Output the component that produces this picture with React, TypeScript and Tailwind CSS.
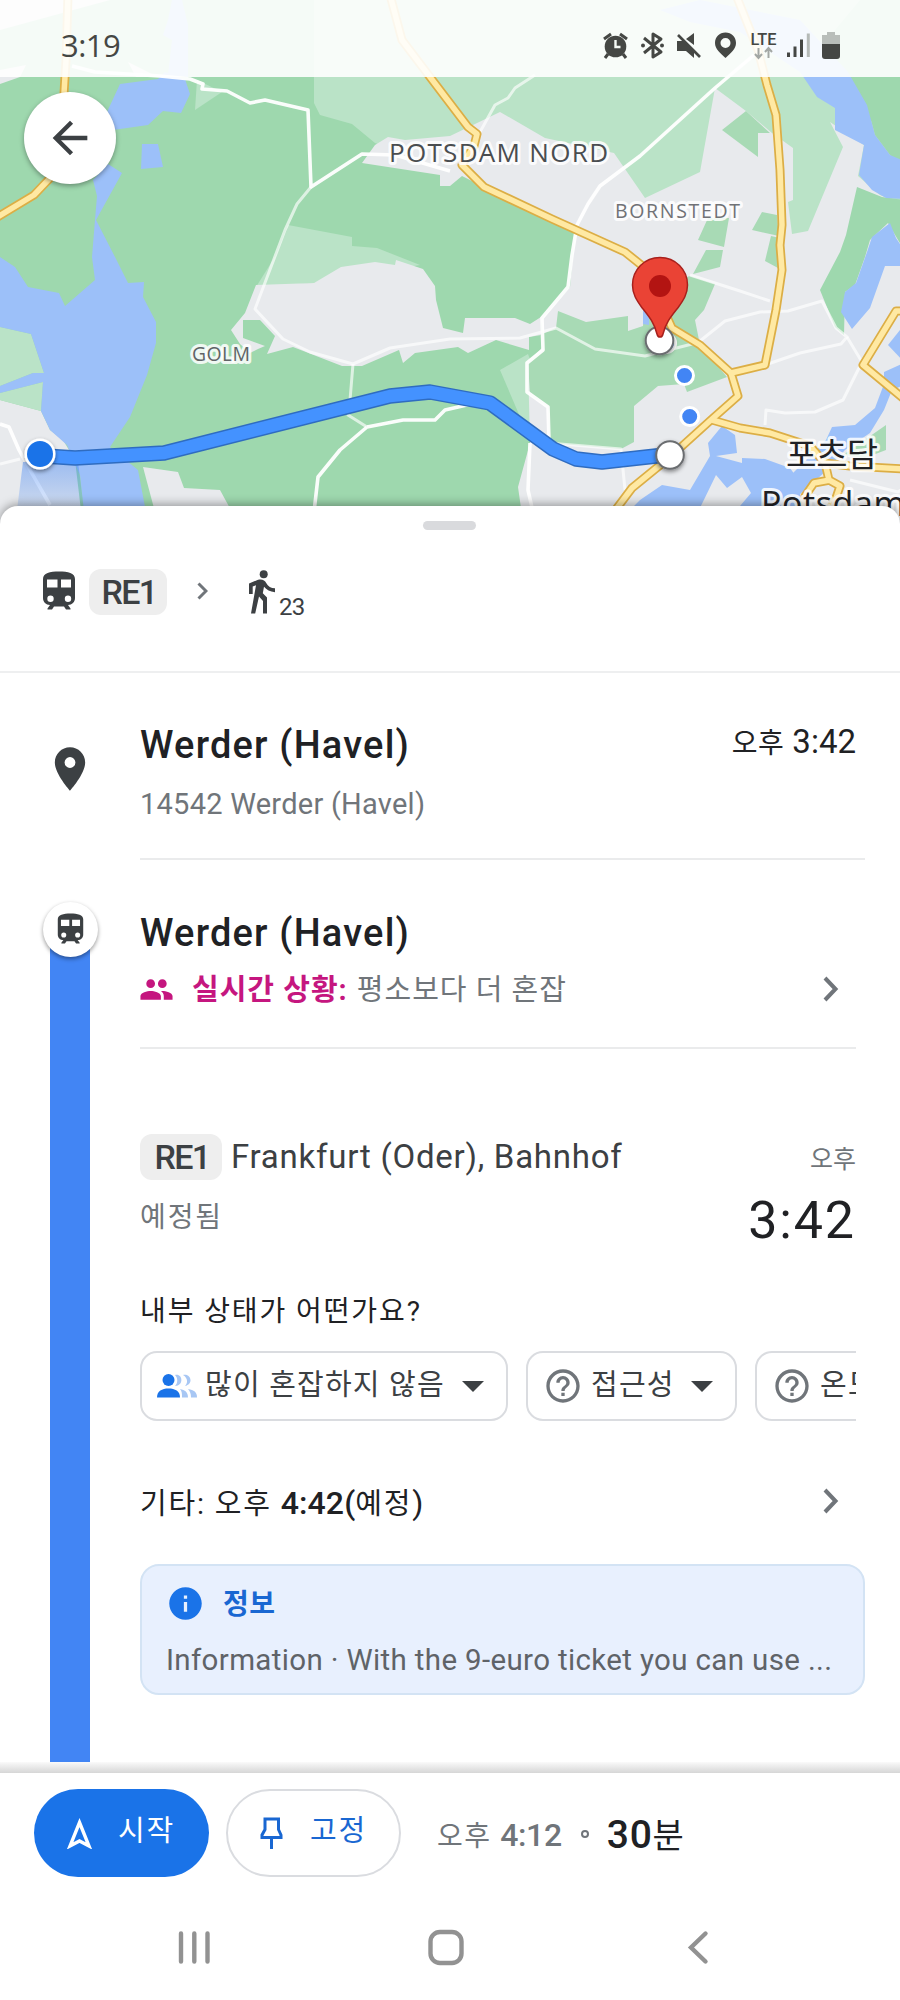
import type { ReactNode } from "react";
import {
  MdArrowBack,
  MdHelpOutline,
  MdInfo,
  MdPeople,
  MdPlace,
} from "react-icons/md";

const SANS = "font-['Roboto','Noto_Sans_CJK_KR',sans-serif]";
const HAND = "font-['Open_Sans','Noto_Sans_CJK_KR',sans-serif]";

const majorRoads = [
  "M68 -5 L66 60 L63 110",
  "M52 176 L34 195 L-4 218",
  "M390 -5 L402 40 L430 77 L468 127 L477 134 L474 146 L462 165 L484 187 L552 219 L625 252 L645 268 L672 328 L700 345 L731 373",
  "M736 -5 L758 50 L767 85 L776 115 L780 170 L782 225 L780 245 L782 270 L776 310 L765 365 L731 373 L738 396 L712 419 L670 457 L632 488 L614 512",
  "M712 420 L740 428 L770 433 L810 446 L825 463 L850 466 L904 469",
  "M825 463 L829 480 L840 486 L836 498 L830 508 M830 480 L814 483 L805 496 L804 510",
  "M904 311 L896 311 L863 365 L904 399",
];

const whiteRoads = [
  "M72 66 L95 72 L160 76 L190 79 L203 84 L202 89 L227 91 L250 103 L265 100 L308 110 L311 187 L362 154 L395 155 L450 171",
  "M754 55 L715 88 L640 156 L600 186 L588 204 L577 225 L572 255 L568 287 L542 318 L543 350 L527 363 L527 392 L548 407 L549 441",
  "M367 427 L403 420 L435 420 L445 410 L480 402 M367 427 L340 450 L318 477 L314 512 M0 424 L9 427 L19 450 L30 470 L50 505",
  "M530 443 L528 490 L533 512",
];

const thinRoads = [
  "M311 187 L297 204 L285 230 L255 309 L283 339 L310 352 L353 364 L390 348 L450 339 L520 338 L556 328 L595 349 L645 356 L700 342",
  "M353 364 L350 400 L348 415 L367 427",
  "M690 275 L740 291 L770 301 M700 341 L725 321 L760 312 L788 311 L822 301 L836 328 L847 337 L841 344 L800 353 L765 365",
  "M847 337 L862 362 L843 400 L815 412 L785 413 L766 410 L765 425",
  "M548 443 L621 449 L625 490 M850 480 L898 492 L904 488 M0 464 L20 459",
  "M535 75 L515 88 L508 98 L495 105 L480 132",
];

const water = [
  "172,0 182,0 188,25 188,77 168,75 172,40 163,35 168,20",
  "120,84 158,79 165,72 185,79 190,94 181,113 163,111 148,125 113,130 107,112",
  "142,144 158,144 163,167 141,169",
  "108,164 122,173 96,220 115,257 128,283 144,282 143,297 156,322 156,343 147,375 130,417 110,447 138,470 146,512 84,512 80,475 67,445 50,430 41,411 43,382 0,393 0,386 33,373 44,373 31,334 0,327 0,257 15,267 28,287 59,293 65,306 95,280 92,257 95,220 97,196 93,180",
  "800,72 817,97 835,108 835,130 864,145 859,175 872,190 886,198 904,199 904,161 890,155 875,135 867,105 848,72 800,20 700,0 660,10 690,22 740,32",
  "890,223 872,237 867,252 856,283 845,292 841,312 852,329 870,308 885,266 904,266 904,250 896,238",
  "904,325 888,345 904,362",
  "884,372 904,363 904,385 892,390 884,410 870,433 845,450 825,472 790,503 784,482 826,440 832,427 855,425 875,408 884,384",
  "722,426 735,435 737,453 716,456 742,463 742,458 765,459 790,468 800,482 800,512 735,512 751,493 742,477 727,488 716,475 698,512 628,512 640,500 662,485 690,490 710,456 708,443",
  "643,308 649,313 649,325 643,324",
];

function MapView() {
  return (
    <svg viewBox="0 0 900 536" className="block h-[536px] w-[900px]">
      <rect width="900" height="536" fill="#9ed8ae" />
      {/* land cover */}
      <path d="M0 0H110L0 30z M128 62l30 15h-22z" fill="#e8eaed" />
      <path d="M0 70L26 65L20 77L0 84z" fill="#e8eaed" />
      <path
        d="M314 0H860L800 72L900 140V200H870L808 240H640L420 160L375 143L352 124L320 115L314 103z M197 80L222 92L195 110z M288 225L352 237V246L377 248L420 265L314 283L256 287L276 255z M528 354L500 370L530 440H548L545 400z"
        fill="#bae3c7"
      />
      <path d="M850 70H904V165L890 155L875 135L867 105z" fill="#9ed8ae" />
      <path
        d="M362 163L375 145L388 137L405 140L450 136L500 112L545 138L614 153L645 198L700 172L715 88L746 111L772 133L793 148V200L788 202L792 234L808 231L843 147L830 122L864 145L858 176L880 195L904 205V536H525L518 487L530 443L528 362L545 345L541 320L570 287L575 232L484 187L462 176L450 186H440V175z"
        fill="#e8eaed"
      />
      <path
        d="M256 285L314 283L341 267L375 262L395 265L396 260L423 269L435 286L436 300L443 328L463 333L465 318L515 318L530 324L541 317V335L529 337V350L496 340L468 353L458 347L415 353L403 363L399 350L362 366H342L293 347L267 354L275 336L260 320H243V338L265 346L258 349L250 353L240 344L231 330L245 313z"
        fill="#e8eaed"
      />
      <path
        d="M0 400L41 411L50 430L63 440L75 460L84 536H0z M143 467L178 472L184 488L220 490L232 512H155z"
        fill="#e8eaed"
      />
      <path d="M0 327L31 334L44 373H33L0 386z M0 393L43 382L41 411L0 400z" fill="#bae3c7" />
      <path
        d="M558 311L586 322L628 316V331L643 326L645 290L690 276L715 284L704 310L695 320L700 345L727 377L687 392L684 384L658 386L634 406V442L621 449L562 444L549 441L548 407L530 395L528 362L543 350L540 335L556 328z M722 130L746 111L770 133L758 133V157z M708 218L729 218L724 247L698 240z M706 250H723L720 267L693 274z M762 212L777 215L779 236L752 230z M771 236L765 261L778 268L780 238z M843 455L886 425V450L865 458z"
        fill="#a8dab5"
      />
      <path
        d="M857 187L882 197L904 200V250L888 223L870 240L865 257L855 285L845 292L844 335L835 327L820 290L840 252L846 235z"
        fill="#9ed8ae"
      />
      <g fill="#9cc0f9">
        {water.map((points) => (
          <polygon key={points} points={points} />
        ))}
      </g>

      {/* roads */}
      <g fill="none" strokeLinejoin="round">
        {thinRoads.map((d) => (
          <path key={d} d={d} stroke="#fff" strokeOpacity="0.65" strokeWidth="3" />
        ))}
        {whiteRoads.map((d) => (
          <path key={d} d={d} stroke="#fff" strokeOpacity="0.95" strokeWidth="3.6" />
        ))}
        {majorRoads.map((d) => (
          <path key={d} d={d} stroke="#dcae45" strokeWidth="9" />
        ))}
        {majorRoads.map((d) => (
          <path key={d} d={d} stroke="#ffe9a3" strokeWidth="5.5" />
        ))}
      </g>

      {/* area labels */}
      <g
        className={HAND}
        fill="#4a4d50"
        stroke="#fff"
        strokeWidth="6"
        strokeOpacity="0.85"
        strokeLinejoin="round"
        paintOrder="stroke"
      >
        <text x="389" y="162" fontSize="26" textLength="219">POTSDAM NORD</text>
        <text x="615" y="218" fontSize="19.500" textLength="125" fill="#707276">BORNSTEDT</text>
        <text x="192" y="361" fontSize="19.500" textLength="58" fill="#606467">GOLM</text>
        <text x="786" y="467" fontSize="34" textLength="92" fill="#202124">포츠담</text>
        <text x="761" y="516" fontSize="34" textLength="144" fill="#202124">Potsdam</text>
      </g>

      {/* route */}
      <defs>
        <linearGradient id="beam" x1="0" y1="0" x2="0" y2="1">
          <stop offset="0" stopColor="#4285f4" stopOpacity="0.45" />
          <stop offset="1" stopColor="#4285f4" stopOpacity="0.15" />
        </linearGradient>
        <filter id="drop" x="-50%" y="-50%" width="200%" height="200%">
          <feDropShadow dx="0" dy="2" stdDeviation="2" floodOpacity="0.45" />
        </filter>
      </defs>
      <path d="M23 462H78L84 510H17z" fill="url(#beam)" />
      <g fill="none" strokeLinejoin="round">
        <path d="M45 456L75 458L164 453L390 396L430 392L490 403L553 449L576 459L602 462L665 455" stroke="#2f6cc0" strokeWidth="15.5" />
        <path d="M45 456L75 458L164 453L390 396L430 392L490 403L553 449L576 459L602 462L665 455" stroke="#4492ff" strokeWidth="12.5" />
      </g>
      <circle cx="40" cy="454" r="15.5" fill="#fff" filter="url(#drop)" />
      <circle cx="40" cy="454" r="13" fill="#1a73e8" />
      <g fill="#4285f4" stroke="#fff" strokeWidth="3">
        <circle cx="666" cy="343" r="9.5" />
        <circle cx="684.500" cy="375.500" r="9" />
        <circle cx="689.700" cy="416.500" r="9" />
      </g>
      <g fill="#fff" stroke="#6b6d70" strokeWidth="2" filter="url(#drop)">
        <circle cx="659.500" cy="340.500" r="13.800" />
        <circle cx="670" cy="455" r="13.800" />
      </g>
      <path
        d="M660 257.500c-15.500 0-27.500 12.300-27.500 27.500c0 9 4 15 9 22c7 9 12.500 15 15.500 27c.8 4 5.200 4 6 0c3-12 8.500-18 15.500-27c5-7 9-13 9-22c0-15.200-12-27.500-27.500-27.500z"
        fill="#ea4335"
        stroke="#a8201c"
        strokeWidth="1.500"
      />
      <circle cx="660" cy="286" r="11" fill="#b31412" />
    </svg>
  );
}

function StatusBar() {
  return (
    <div className="absolute inset-x-0 top-0 flex h-[77px] items-start justify-between bg-white/90 pl-[61px] pr-[59px]">
      <span className={`${HAND} mt-[27px] text-[31px] leading-[36px] tracking-[-0.5px] text-[#454744]`}>3:19</span>
      <svg viewBox="602 30 239 32" className="mt-[30px] h-[32px] w-[239px]" fill="#454744">
        {/* alarm */}
        <circle cx="615.500" cy="46.500" r="10.800" />
        <path d="M604 39l7-5M627 39l-7-5M608 54l-3 4M623 54l3 4" stroke="#454744" strokeWidth="3" />
        <path d="M615.500 40v7h5" fill="none" stroke="#f5faf6" strokeWidth="2.400" />
        {/* bluetooth */}
        <path d="M644 38l17 14l-8 5V34l8 5l-17 14" fill="none" stroke="#454744" strokeWidth="3" strokeLinejoin="round" />
        <circle cx="643" cy="45.500" r="2" />
        <circle cx="662" cy="45.500" r="2" />
        {/* muted speaker */}
        <path d="M677 41h6l11 11v6l-8-7h-9zM686 39l8-6v12z" />
        <path d="M678 35l22 22" stroke="#454744" strokeWidth="2.600" />
        {/* location */}
        <path fillRule="evenodd" d="M725.500 32.500c-6 0-10.500 4.500-10.500 10.500c0 6 5.500 10.500 10.500 15c5-4.500 10.500-9 10.500-15c0-6-4.500-10.500-10.500-10.500zm0 5.500a5 5 0 110 10a5 5 0 010-10z" />
        <text x="750.500" y="44.500" fontSize="16" fontWeight="500" textLength="26" lengthAdjust="spacingAndGlyphs" className={SANS}>LTE</text>
        <path d="M758.500 48v9.500M755 54l3.500 4l3.500-4M768.500 58v-9.500M765 52l3.500-4l3.500 4" fill="none" stroke="#a3a7a4" strokeWidth="2" />
        {/* signal */}
        <path d="M788.500 52.500v4.500M795 46.500v10.500M801.500 39.500v17.500" stroke="#454744" strokeWidth="3" />
        <path d="M808.300 33.500v23.500" stroke="#b5bab7" strokeWidth="3" />
        {/* battery */}
        <path d="M827 32h8v3h5v10h-18v-10h5z" fill="#b9beba" />
        <path d="M822 44h18v12a3 3 0 01-3 3h-12a3 3 0 01-3-3z" />
      </svg>
    </div>
  );
}

function TrainIcon({ className }: { className: string }) {
  return (
    <svg viewBox="0 0 32 39" className={className} fill="#3c4043">
      <path
        fillRule="evenodd"
        d="M16 .5C7 .5 0 2 0 8v19c0 4 3 7 7 7l-2.500 3.500v1h4.500l2-3h10l2 3h4.500v-1L25 34c4 0 7-3 7-7V8C32 2 25 .5 16 .5zM4 8.500h10.500v8H4zM18 8.500h10v8H18zM7.500 24.500a3.200 3.200 0 110 6.400a3.200 3.200 0 010-6.400zM25 24.500a3.200 3.200 0 110 6.400a3.200 3.200 0 010-6.400z"
      />
    </svg>
  );
}

function WalkIcon() {
  return (
    <svg viewBox="0 0 27 44" className="h-[44px] w-[27px]" fill="#3c4043">
      <circle cx="15.700" cy="4.200" r="4" />
      <path d="M9.500 10L1 13.500V24h3.700v-7.500L8 15.200L3 43.500h4.200l3.800-17l4 4.500v12.500h4V27.500l-4.200-4.300l1.200-6.500c2.500 3 6 5 11 5.500v-4c-4 0-7-2-8.800-5.300C16.800 10.500 14 8.500 9.500 10z" />
    </svg>
  );
}

function Chevron() {
  return (
    <svg viewBox="0 0 16 26" className="h-[26px] w-[16px] shrink-0">
      <path d="M2 2l10.500 11L2 24" fill="none" stroke="#70757a" strokeWidth="4" />
    </svg>
  );
}

function LineBadge({ className }: { className: string }) {
  return (
    <span className={`flex h-[46px] items-center justify-center rounded-[12px] bg-[#eeeeee] pl-[2px] text-[34px] font-medium tracking-[-1.6px] text-[#3c4043] ${className}`}>
      RE1
    </span>
  );
}

function FilterChip({ icon, label, className }: { icon: ReactNode; label: string; className: string }) {
  return (
    <div className={`flex h-[70px] shrink-0 items-center rounded-[17px] border-2 border-[#dadce0] ${className}`}>
      {icon}
      <span className="ml-[8px] flex-1 whitespace-nowrap tracking-[1.2px] text-[#3c4043]">{label}</span>
      <svg viewBox="0 0 22 11" className="h-[11px] w-[22px]">
        <path d="M0 0h22l-11 11z" fill="#3c4043" />
      </svg>
    </div>
  );
}

function CrowdIcon() {
  return (
    <svg viewBox="0 0 40 24" className="h-[24px] w-[40px] shrink-0">
      <g fill="#a8c7f4">
        <path d="M18 1c8-2 9 11 0 11c3-3 3-8 0-11zM26 1c8-2 11 9 2 11c3-3 3-8-2-11zM23 15c5 1 8 3 8 8.500h-6c0-4 0-6-2-8.500zM31 15c6 1 9 3 9 8.500h-6c0-4-1-6-3-8.500z" />
      </g>
      <circle cx="11.500" cy="6" r="6" fill="#1a73e8" />
      <path d="M0 23.500C0 17 5 14.500 11.500 14.500S23 17 23 23.500z" fill="#1a73e8" />
    </svg>
  );
}

export default function App() {
  return (
    <div className={`${SANS} relative flex h-[2000px] w-[900px] flex-col overflow-hidden bg-white text-[#202124]`}>
      <header className="relative -mb-[30px] h-[536px] shrink-0">
        <MapView />
        <StatusBar />
        <button className="absolute left-[24px] top-[92px] flex size-[92px] items-center justify-center rounded-full bg-white shadow-[0_2px_5px_rgba(0,0,0,0.35)]">
          <MdArrowBack className="size-[52px] text-[#3c4043]" />
        </button>
      </header>

      <main className="relative flex h-[1256px] shrink-0 flex-col rounded-t-[18px] bg-white shadow-[0_-2px_10px_rgba(0,0,0,0.35)]">
        {/* trip overview */}
        <section className="flex h-[167px] flex-col border-b-2 border-[#eeeff0]">
          <div className="ml-[423px] mt-[15px] h-[9px] w-[53px] rounded-full bg-[#d9dadd]" />
          <div className="mt-[39px] flex h-[46px] items-center pl-[43px]">
            <TrainIcon className="-mt-[4px] h-[39px] w-[32px]" />
            <LineBadge className="ml-[14px] w-[78px]" />
            <svg viewBox="0 0 11 18" className="-mt-[2px] ml-[30px] h-[18px] w-[11px]">
              <path d="M1.500 1.500l7.500 7.500l-7.500 7.500" fill="none" stroke="#70757a" strokeWidth="3" />
            </svg>
            <div className="-mt-[1px] ml-[40px] flex items-end">
              <WalkIcon />
              <span className="-mb-[7px] ml-[4px] text-[24px] leading-[28px] tracking-[-0.8px] text-[#3c4043]">23</span>
            </div>
          </div>
        </section>

        {/* starting point */}
        <section className="flex h-[187px]">
          <div className="flex w-[140px] justify-center pt-[70px]">
            <MdPlace className="size-[52px] text-[#3c4043]" />
          </div>
          <div className="w-[725px] border-b-2 border-[#eaebec]">
            <div className="mt-[52px] flex h-[40px] items-center justify-between pr-[9px]">
              <h1 className="text-[38px] font-medium leading-[40px] tracking-[1.2px]">Werder (Havel)</h1>
              <span className="-mt-[5px] text-[33px] leading-[40px]">
                <span className="text-[28px] tracking-[0.5px]">오후</span> 3:42
              </span>
            </div>
            <p className="mt-[21px] text-[29px] leading-[36px] tracking-[0.25px] text-[#70757a]">14542 Werder (Havel)</p>
          </div>
        </section>

        {/* boarding stop */}
        <section className="flex flex-1">
          <div className="flex w-[140px] flex-col items-center pt-[42px]">
            <div className="relative z-10 flex size-[55px] shrink-0 items-center justify-center rounded-full bg-white shadow-[0_2px_4px_rgba(0,0,0,0.4)]">
              <TrainIcon className="-mt-[2px] h-[31px] w-[27px]" />
            </div>
            <div className="-mt-[28px] w-[40px] flex-1 bg-[#4285f4]" />
          </div>
          <div className="w-[725px]">
            <div className="mr-[9px] h-[189px] border-b-2 border-[#eaebec] pt-[53px]">
              <h2 className="text-[38px] font-medium leading-[40px] tracking-[1.2px]">Werder (Havel)</h2>
              <div className="mt-[14px] flex h-[44px] items-center">
                <MdPeople className="-ml-[1px] size-[35px] text-[#c5167f]" />
                <span className="ml-[18px] mt-[3px] text-[29px] font-bold tracking-[1px] text-[#c5167f]">실시간 상황:</span>
                <span className="ml-[9px] mt-[3px] flex-1 text-[29px] tracking-[1px] text-[#70757a]">평소보다 더 혼잡</span>
                <div className="mr-[17px] flex">
                  <Chevron />
                </div>
              </div>
            </div>

            <div className="mr-[9px] mt-[85px] flex justify-between">
              <div>
                <div className="flex h-[46px] items-center">
                  <LineBadge className="w-[82px]" />
                  <span className="ml-[9px] text-[33px] leading-[48px] tracking-[0.75px] text-[#3c4043]">Frankfurt (Oder), Bahnhof</span>
                </div>
                <p className="mt-[18px] text-[28px] leading-[40px] tracking-[1.9px] text-[#70757a]">예정됨</p>
              </div>
              <div className="text-right">
                <p className="mt-[7px] text-[25px] leading-[38px] text-[#70757a]">오후</p>
                <p className="mt-[14px] text-[52px] leading-[56px] tracking-[1.9px]">3:42</p>
              </div>
            </div>

            <p className="mt-[43px] text-[28px] leading-[40px] tracking-[1.9px]">내부 상태가 어떤가요?</p>
            <div className="mr-[9px] mt-[19px] flex gap-[18px] overflow-hidden text-[29px]">
              <FilterChip icon={<CrowdIcon />} label="많이 혼잡하지 않음" className="w-[368px] pl-[15px] pr-[22px]" />
              <FilterChip icon={<MdHelpOutline className="size-[40px] text-[#70757a]" />} label="접근성" className="w-[211px] pl-[15px] pr-[22px]" />
              <FilterChip icon={<MdHelpOutline className="size-[40px] text-[#70757a]" />} label="온도" className="w-[184px] pl-[15px] pr-[22px]" />
            </div>

            <div className="mr-[26px] mt-[58px] flex h-[44px] items-center justify-between">
              <span className="mt-[3px] text-[29px] tracking-[1.8px]">
                기타: 오후 <span className="text-[32px] font-medium tracking-[0.1px]">4:42(</span>예정<span className="text-[32px]">)</span>
              </span>
              <Chevron />
            </div>

            <div className="mt-[41px] h-[131px] rounded-[19px] border-2 border-[#d3e3f4] bg-[#e8f0fe] pl-[24px] pt-[16px]">
              <div className="flex h-[42px] items-center">
                <MdInfo className="size-[39px] text-[#1a73e8]" />
                <span className="ml-[18px] mt-[3px] text-[28px] font-bold tracking-[0.6px] text-[#1967d2]">정보</span>
              </div>
              <p className="mt-[18px] whitespace-nowrap text-[29.5px] leading-[36px] tracking-[0.35px] text-[#5f6368]">Information · With the 9-euro ticket you can use ...</p>
            </div>
          </div>
        </section>
      </main>

      <footer className="relative flex flex-1 flex-col">
        <div className="h-[11px] bg-linear-to-b from-[#fafafa] to-[#d6d6d6]" />
        <div className="mt-[16px] flex h-[88px] items-center pl-[34px]">
          <button className="flex h-[88px] w-[175px] items-center rounded-full bg-[#1a73e8] pl-[33px] text-white">
            <svg viewBox="0 0 25 31" className="h-[31px] w-[25px]">
              <path d="M12.500 4.500L22 28l-9.500-5L3 28z" fill="none" stroke="#fff" strokeWidth="3.400" />
            </svg>
            <span className="-mt-[3px] ml-[26px] text-[29px] tracking-[1.8px]">시작</span>
          </button>
          <button className="ml-[17px] flex h-[88px] w-[175px] items-center rounded-full border-2 border-[#dadce0] pl-[32px] text-[#1967d2]">
            <svg viewBox="0 0 23 32" className="h-[32px] w-[23px]" fill="none" stroke="#1967d2" strokeWidth="3">
              <path d="M5 2h13.500v10.500L21 18v2.500H2V18l3-5.500zM11.500 20.500V32" />
            </svg>
            <span className="-mt-[3px] ml-[27px] text-[29px] tracking-[1.8px]">고정</span>
          </button>
          <span className="ml-[36px] mt-[3px] text-[28px] text-[#70757a]">
            <span className="tracking-[1.6px]">오후 </span>
            <span className="text-[32px] font-medium tracking-[-0.4px]">4:12</span>
          </span>
          <span className="ml-[19px] mt-[2px] size-[8px] rounded-full border-2 border-[#70757a]" />
          <span className="ml-[18px] mt-[4px] text-[39px] font-medium tracking-[0.8px]">
            30<span className="text-[34px] font-normal">분</span>
          </span>
        </div>

        {/* system navigation */}
        <svg viewBox="170 1925 550 44" className="ml-[170px] mt-[48px] h-[44px] w-[550px]" fill="none" stroke="#929292" strokeWidth="4.400" strokeLinecap="round">
          <path d="M181 1933.500v28M194.300 1933.500v28M207.500 1933.500v28" />
          <rect x="430.500" y="1932" width="31" height="31" rx="9.500" />
          <path d="M705.500 1933.500L691 1947.500l14.500 14" />
        </svg>
      </footer>
    </div>
  );
}
